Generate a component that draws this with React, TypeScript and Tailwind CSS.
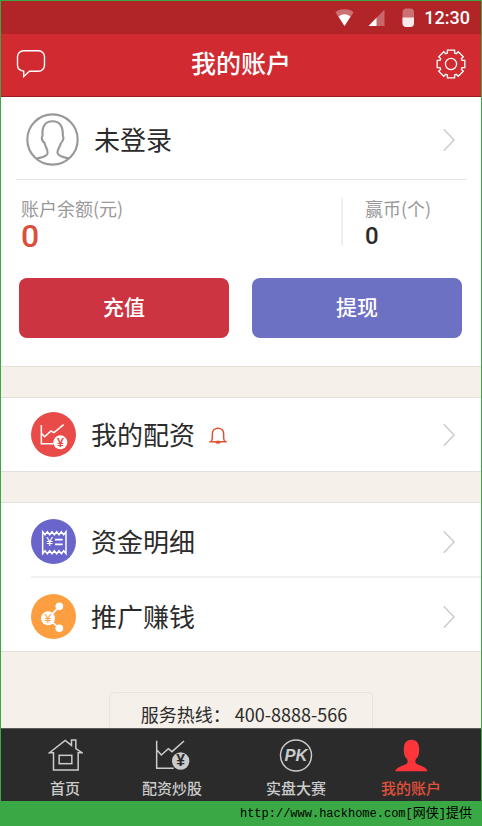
import type { ReactNode } from 'react';

// Eight-toothed cog outline, one tooth every 45 degrees
const GEAR_POINTS = Array.from({ length: 8 }, (_, i) => {
  const angle = (i * Math.PI) / 4;
  return [
    [-3.6, -11],
    [-3.6, -13.8],
    [3.6, -13.8],
    [3.6, -11],
  ]
    .map(([x, y]) => {
      const px = x * Math.cos(angle) - y * Math.sin(angle);
      const py = x * Math.sin(angle) + y * Math.cos(angle);
      return `${px.toFixed(2)},${py.toFixed(2)}`;
    })
    .join(' ');
}).join(' ');

function ChatIcon() {
  return (
    <svg viewBox="0 0 30 30" className="w-[30px] h-[30px]" fill="none" stroke="#fff" strokeWidth="1.4">
      <path d="M7.5 1.7h15a6 6 0 0 1 6 6v8.5a6 6 0 0 1-6 6h-9l-5.8 5.3v-5.4C4 21.6 1.5 19.4 1.5 16.2V7.7a6 6 0 0 1 6-6z" />
    </svg>
  );
}

function GearIcon() {
  return (
    <svg viewBox="-15 -15 30 30" className="w-[30px] h-[30px]" fill="none" stroke="#fff" strokeWidth="1.3">
      <polygon points={GEAR_POINTS} />
      <circle r="5.6" />
    </svg>
  );
}

function AvatarIcon() {
  return (
    <svg viewBox="0 0 160 160" className="w-[53px] h-[53px]" fill="none" stroke="#999" strokeWidth="6.5">
      <circle cx="80" cy="80" r="76" />
      <path d="M33 137C50 134 63 130 65 122C67 108 58 104 56 90C50 86 47 82 48 74C49 70 50 68 50 66C48 40 58 25 80 25C102 25 112 40 111 66C111 70 113 72 113 76C112 84 109 88 105 92C102 104 94 110 95 120C97 130 112 134 128 137" />
    </svg>
  );
}

function Chevron() {
  return (
    <svg viewBox="0 0 12 24" className="w-3 h-6 shrink-0" fill="none" stroke="#ccc" strokeWidth="1.5">
      <path d="M0.8 1.2L11 12L0.8 22.8" />
    </svg>
  );
}

function BellIcon() {
  return (
    <svg viewBox="0 0 54 50" className="w-[18px] h-[17px]" fill="none" stroke="#e0512f" strokeWidth="4.5">
      <path d="M1 44H53M7 43C12 34 10 28 10 20C10 9 18 3 27 3C36 3 44 9 44 20C44 28 42 34 47 43" />
      <ellipse cx="27" cy="45" rx="7" ry="5" fill="#e0512f" stroke="none" />
    </svg>
  );
}

function TradeIcon() {
  return (
    <svg viewBox="0 0 135 135" className="w-[45px] h-[45px]" fill="none" stroke="#fff" strokeWidth="4.5">
      <circle cx="67.5" cy="67.5" r="67.5" fill="#e84b48" stroke="none" />
      <path d="M31 39V95H68M31 64L41 74L60 57L69 62L98 38" />
      <circle cx="88" cy="91" r="21" fill="#fff" stroke="none" />
      <text x="88" y="104" textAnchor="middle" fontSize="37" fontWeight="700" fill="#e84b48" stroke="none">¥</text>
    </svg>
  );
}

function ReceiptIcon() {
  return (
    <svg viewBox="0 0 135 135" className="w-[45px] h-[45px]" fill="none" stroke="#fff" strokeWidth="4.5">
      <circle cx="67.5" cy="67.5" r="67.5" fill="#6a65cb" stroke="none" />
      <path d="M35 38l7 9l7-9l7 9l7-9l7 9l7-9l7 9l7-9l7 9l7-9V104l-7-9l-7 9l-7-9l-7 9l-7-9l-7 9l-7-9l-7 9l-7-9l-7 9z" />
      <path d="M72 62H95M72 76H95" strokeWidth="5" />
      <text x="56" y="82" textAnchor="middle" fontSize="36" fill="#fff" stroke="none">¥</text>
    </svg>
  );
}

function ShareIcon() {
  return (
    <svg viewBox="0 0 135 135" className="w-[45px] h-[45px]">
      <circle cx="67.5" cy="67.5" r="67.5" fill="#fd9e40" />
      <path d="M85 37L51 73L85 103" fill="none" stroke="#fff" strokeWidth="5" />
      <circle cx="51" cy="73" r="21" fill="#fff" />
      <circle cx="85" cy="37" r="11.5" fill="#fff" />
      <circle cx="85" cy="103" r="11.5" fill="#fff" />
      <text x="51" y="86" textAnchor="middle" fontSize="37" fill="#fd9e40">¥</text>
    </svg>
  );
}

function HomeIcon() {
  return (
    <svg viewBox="0 0 104 99" className="w-[35px] h-[33px]" fill="none" stroke="#ccc" strokeWidth="4.5">
      <path d="M16 41H4L51 4L70 19V3H83V29L101 41H90V93H16z" />
      <rect x="33" y="49" width="38" height="25" />
    </svg>
  );
}

function StockIcon() {
  return (
    <svg viewBox="0 0 105 99" className="w-[35px] h-[33px]" fill="none" stroke="#ccc" strokeWidth="4.5">
      <path d="M5 5V88H56M5 32L19 48L40 29L51 38L87 6" />
      <circle cx="77" cy="66" r="26" fill="#ccc" stroke="none" />
      <text x="77" y="82" textAnchor="middle" fontSize="47" fontWeight="700" fill="#2b2b2b" stroke="none">¥</text>
    </svg>
  );
}

function PkIcon() {
  return (
    <svg viewBox="0 0 34 34" className="w-[34px] h-[33px]">
      <circle cx="17" cy="17" r="16" fill="none" stroke="#ccc" strokeWidth="1.5" />
      <text x="17" y="23" textAnchor="middle" fontSize="17" fontWeight="700" fontStyle="italic" fill="#ccc">PK</text>
    </svg>
  );
}

function PersonIcon() {
  return (
    <svg viewBox="0 0 98 99" className="w-[33px] h-[33px]">
      <path
        fill="#fc353a"
        d="M0 97C4 83 23 81 34 75C38 71 38 66 36 60C30 56 26 46 26 36C25 14 32 2 49 2C66 2 73 14 72 36C72 46 68 56 62 60C60 68 60 72 65 75C77 81 93 83 97 97z"
      />
    </svg>
  );
}

function StatusBar() {
  return (
    <div className="h-[33px] shrink-0 flex items-center justify-end bg-[#b12529] pr-[11px]">
      <svg viewBox="0 0 80 20" className="w-20 h-5 mr-[9px]" fill="#fff">
        <path d="M0.5 4.5Q2 1.4 9.5 1.2Q17 1.4 18.5 4.5L9.5 18z" opacity="0.35" />
        <path d="M3.5 8.5Q9.5 4 15.5 8.5L9.5 18z" />
        <path d="M49.5 1.5V18H33.5z" opacity="0.3" />
        <path d="M41.5 9.8V18H33.5z" />
        <rect x="67.5" y="0.5" width="11.5" height="18.5" rx="4" opacity="0.35" />
        <path d="M67.5 9.5H79V15A4 4 0 0 1 75 19H71.5A4 4 0 0 1 67.5 15z" opacity="0.85" />
      </svg>
      <span className="font-['Roboto',sans-serif] text-lg leading-5 font-medium text-white">12:30</span>
    </div>
  );
}

interface MenuRowProps {
  icon: ReactNode;
  label: string;
  badge?: ReactNode;
  className?: string;
}

function MenuRow({ icon, label, badge, className = '' }: MenuRowProps) {
  return (
    <a href="#" className={`h-[73px] flex items-center pr-[26px] ${className}`}>
      {icon}
      <span className="ml-[15px] pt-0.5 text-[26px] leading-8">{label}</span>
      {badge && <span className="ml-[14px] pt-0.5">{badge}</span>}
      <span className="ml-auto">
        <Chevron />
      </span>
    </a>
  );
}

const TABS = [
  { label: '首页', icon: <HomeIcon /> },
  { label: '配资炒股', icon: <StockIcon /> },
  { label: '实盘大赛', icon: <PkIcon /> },
  { label: '我的账户', icon: <PersonIcon />, active: true },
];

export default function App() {
  return (
    <div className="h-screen flex flex-col border-x border-t border-[#3aa945] bg-[#f5f0e9] text-[#2b2b2b] font-['Liberation_Sans','Noto_Sans_CJK_SC',sans-serif]">
      <StatusBar />

      {/* Title bar */}
      <header className="h-[63px] shrink-0 flex items-center justify-between px-[15px] pb-0.5 bg-[#d12a30] border-b border-[#951c22]">
        <button type="button" aria-label="消息">
          <ChatIcon />
        </button>
        <h1 className="text-[25px] leading-8 font-medium text-white">我的账户</h1>
        <button type="button" aria-label="设置">
          <GearIcon />
        </button>
      </header>

      <main className="flex-1 min-h-0 overflow-hidden">
        {/* Account */}
        <section className="bg-white border-b border-[#e3e0db] pb-7">
          <a href="#" className="mx-[15px] h-[83px] flex items-center border-b border-[#e2e2e2] pl-[10px] pr-[11px] pt-[3px]">
            <AvatarIcon />
            <span className="ml-[15px] pt-0.5 text-[26px] leading-8">未登录</span>
            <span className="ml-auto">
              <Chevron />
            </span>
          </a>

          <div className="h-20 flex px-5 pt-[18px] font-['Noto_Sans_CJK_SC',sans-serif]">
            <div className="flex-1">
              <div className="text-lg leading-5 text-[#999]">账户余额(元)</div>
              <div className="text-[32px] leading-9 font-medium text-[#dc4f3c] font-['Roboto',sans-serif]">0</div>
            </div>
            <div className="w-[120px] h-12 border-l-2 border-[#f0f0f0] pl-[22px]">
              <div className="text-lg leading-5 text-[#999]">赢币(个)</div>
              <div className="text-2xl leading-9 font-medium font-['Roboto',sans-serif]">0</div>
            </div>
          </div>

          <div className="mt-[18px] pl-[18px] pr-[19px] grid grid-cols-2 gap-[23px]">
            <button type="button" className="h-[60px] rounded-lg bg-[#cb3440] text-[21px] font-medium text-white">
              充值
            </button>
            <button type="button" className="h-[60px] rounded-lg bg-[#6c71c4] text-[21px] font-medium text-white">
              提现
            </button>
          </div>
        </section>

        <section className="mt-[30px] pl-[30px] bg-white border-y border-[#e3e0db]">
          <MenuRow icon={<TradeIcon />} label="我的配资" badge={<BellIcon />} />
        </section>

        <section className="mt-[30px] pl-[30px] bg-white border-y border-[#e3e0db]">
          <MenuRow icon={<ReceiptIcon />} label="资金明细" className="pt-1" />
          <div className="border-t-2 border-[#f1f1f1]">
            <MenuRow icon={<ShareIcon />} label="推广赚钱" className="pt-1" />
          </div>
        </section>

        {/* Hotline */}
        <div className="mt-10 flex justify-center">
          <a
            href="tel:400-8888-566"
            className="h-11 flex items-center pl-[31px] pr-[25px] rounded border border-[#e8e3dc] text-lg leading-6 font-['Noto_Sans_CJK_SC',sans-serif]"
          >
            服务热线： 400-8888-566
          </a>
        </div>
      </main>

      {/* Bottom tabs */}
      <nav className="h-[73px] shrink-0 grid grid-cols-[64fr_150fr_98fr_132fr] pl-8 pr-1 bg-[#2b2b2b] border-t border-[#5c5c5a]">
        {TABS.map((tab) => (
          <a
            key={tab.label}
            href="#"
            className={`flex flex-col items-center pt-[10px] text-[15px] leading-5 font-medium ${
              tab.active ? 'text-[#e2503c]' : 'text-[#ccc]'
            }`}
          >
            {tab.icon}
            <span className="mt-[7px]">{tab.label}</span>
          </a>
        ))}
      </nav>

      <footer className="h-[25px] shrink-0 flex items-center justify-end pr-[9px] bg-[#3aa945] text-black font-['Liberation_Mono','Noto_Sans_CJK_SC',monospace]">
        <a href="http://www.hackhome.com" className="text-xs leading-5">
          http://www.hackhome.com[<span className="text-[13px]">网侠</span>]<span className="text-[13px]">提供</span>
        </a>
      </footer>
    </div>
  );
}
